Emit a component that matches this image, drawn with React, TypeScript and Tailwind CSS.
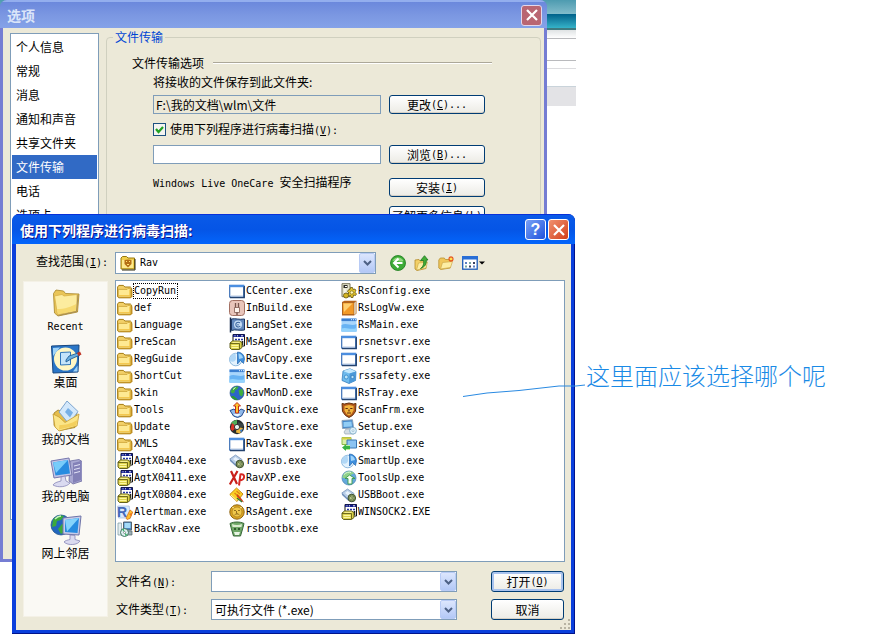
import { Fragment, useState } from 'react';
import type { ReactNode } from 'react';

const categories = ['个人信息', '常规', '消息', '通知和声音', '共享文件夹', '文件传输', '电话', '选项卡'];

const files: [string, string][] = [
  ['CopyRun', 'folder'],
  ['def', 'folder'],
  ['Language', 'folder'],
  ['PreScan', 'folder'],
  ['RegGuide', 'folder'],
  ['ShortCut', 'folder'],
  ['Skin', 'folder'],
  ['Tools', 'folder'],
  ['Update', 'folder'],
  ['XMLS', 'folder'],
  ['AgtX0404.exe', 'agent'],
  ['AgtX0411.exe', 'agent'],
  ['AgtX0804.exe', 'agent'],
  ['Alertman.exe', 'alert'],
  ['BackRav.exe', 'backup'],
  ['CCenter.exe', 'window'],
  ['InBuild.exe', 'plug'],
  ['LangSet.exe', 'flag'],
  ['MsAgent.exe', 'agent'],
  ['RavCopy.exe', 'pie'],
  ['RavLite.exe', 'sky'],
  ['RavMonD.exe', 'globe'],
  ['RavQuick.exe', 'quick'],
  ['RavStore.exe', 'store'],
  ['RavTask.exe', 'window'],
  ['ravusb.exe', 'usb'],
  ['RavXP.exe', 'xp'],
  ['RegGuide.exe', 'guide'],
  ['RsAgent.exe', 'badge'],
  ['rsbootbk.exe', 'bin'],
  ['RsConfig.exe', 'config'],
  ['RsLogVw.exe', 'book'],
  ['RsMain.exe', 'sky'],
  ['rsnetsvr.exe', 'window'],
  ['rsreport.exe', 'window'],
  ['rssafety.exe', 'cube'],
  ['RsTray.exe', 'window'],
  ['ScanFrm.exe', 'lion'],
  ['Setup.exe', 'setup'],
  ['skinset.exe', 'skin'],
  ['SmartUp.exe', 'pie'],
  ['ToolsUp.exe', 'toolsup'],
  ['USBBoot.exe', 'usb'],
  ['WINSOCK2.EXE', 'agent'],
];

const fileIcons: Record<string, ReactNode> = {
  folder: (
    <>
      <path d="M.6 4 1.800 2.400h4.600l1.400 1.600h5.600l1.200 1.200v8.400l-1 1.200H1.800l-1.200-1z" fill="#f2d068" stroke="#a57c12" />
      <path d="M13.500 6.500h1.900v6.800l-1.600 1.600H3z" fill="#c08f22" />
      <path d="M1.300 6.400h8.800l1-1h2.500v8.600H1.300z" fill="#fee992" stroke="#c69b2c" strokeWidth=".7" />
      <path d="M2 12.600h11M12.800 6.500v7" stroke="#f3c548" />
    </>
  ),
  window: (
    <>
      <rect x=".7" y="2.500" width="14" height="11.500" fill="#fff" stroke="#3b6fb5" strokeWidth="1.200" />
      <path d="M.3 1.800h14.900v2.400H.3z" fill="#4b8ee0" />
      <path d="M15.300 3v11.700H1" fill="none" stroke="#24436f" strokeWidth="1.300" />
      <path d="M2 13h12" stroke="#b9c8df" />
    </>
  ),
  sky: (
    <>
      <rect x=".5" y="1.500" width="15" height="13" fill="#a9d6fb" />
      <path d="M.5 8c5-3 10 2 15-1v7.500H.5z" fill="#68b3f3" />
      <path d="M.5 11.500c5-2 9 2 15-.5v3.500H.5z" fill="#93d3fc" />
      <path d="M.5 1.500h15v2.600H.5z" fill="#3c7fd0" />
      <path d="M10 2.700h1m1 0h1m1 0h1" stroke="#e6f3ff" />
    </>
  ),
  agent: (
    <>
      <path d="M4 .5h11.500v11.500H4z" fill="#fff" stroke="#111" />
      <path d="M4 .5h11.500V3H4z" fill="#141f8e" />
      <path d="M5.500 1.800h1m1.500 0h1m3 0h2" stroke="#eee" />
      <path d="M6 5.500h2m1 0h2m1 0h2" stroke="#2635a0" strokeWidth="1.600" />
      <path d="M13.500 7v4" stroke="#222" strokeWidth="1.500" />
      <path d="m1 9 2.500-2h7l2.500 1.500v5l-2.500 2h-8L1 14z" fill="#dcd24a" stroke="#55520f" strokeWidth=".9" />
      <path d="M1 9.500h9.500V15" fill="none" stroke="#55520f" strokeWidth=".8" />
      <path d="M3.500 8.300h7M2.500 11.500h7M2.500 13.500h7" stroke="#fdf7a2" />
    </>
  ),
  alert: (
    <>
      <path d="M.7 2h11.500l1.500 12H1.500z" fill="#d9e8fb" stroke="#91aed9" strokeWidth=".6" />
      <text x="0" y="13" fontSize="14" fontWeight="bold" fontFamily="Liberation Sans, sans-serif" fill="#4368b9">R</text>
      <path d="m9 14 4-8 2.700 2-2.700 6.500-3 1z" fill="#ffc02e" stroke="#cf6712" strokeWidth=".7" />
      <path d="m12 10 3.500-1.500-1 4z" fill="#ef7a1c" />
    </>
  ),
  backup: (
    <>
      <path d="M6.500 1h8v8h-8z" fill="#4b87c5" stroke="#52636e" />
      <path d="M7.500 2h6v5h-6z" fill="#a4dbf8" />
      <path d="M8 10h7v4H8z" fill="#9aaeb5" stroke="#53646b" strokeWidth=".7" />
      <path d="M1 2h3.500v12H1z" fill="#e4eef0" stroke="#7a959b" strokeWidth=".7" />
      <circle cx="7.500" cy="11.500" r="4" fill="#dceef0" stroke="#3f7260" />
      <path d="m7.500 11.500-2.500-3 2-.8zM7.500 11.500l3 2.500-2 1z" fill="#3cb66a" />
      <circle cx="7.500" cy="11.500" r="1" fill="#fff" stroke="#333" strokeWidth=".4" />
    </>
  ),
  plug: (
    <>
      <rect x=".5" y=".5" width="15" height="15" rx="3" fill="#e9c5ba" stroke="#a37063" />
      <path d="M6.500 3v5M9.500 3v5" stroke="#79554c" strokeWidth="1.300" />
      <path d="M5.500 7.500h5v5h-5z" fill="#fff4ec" stroke="#835b50" strokeWidth=".8" />
      <path d="M8 12.500V15" stroke="#69473f" strokeWidth="1.300" />
    </>
  ),
  flag: (
    <>
      <path d="M1.500.5v15" stroke="#14284c" strokeWidth="1.500" />
      <path d="M2.500 2c4-1 7 1 13 0v11c-5 1-9-1-13 .5z" fill="#6288bd" stroke="#1c3763" />
      <circle cx="9" cy="7.500" r="4" fill="#c5dcf4" />
      <path d="M11 6a2.400 2.400 0 1 0 .2 3M9 7v1.500" fill="none" stroke="#3c669f" strokeWidth="1.100" />
    </>
  ),
  pie: (
    <>
      <circle cx="6.800" cy="8.500" r="6.300" fill="#e3f2fd" stroke="#77a9d5" strokeWidth=".8" />
      <path d="M1 10c3 2 6 0 6-3L6.500 2.500A6 6 0 0 0 1 10z" fill="#b0d7f6" />
      <path d="M8.500 1a7 7 0 0 1 7 7l-1 4.500-3-3-3 3.500z" fill="#3f8fdd" stroke="#2266ae" strokeWidth=".7" />
      <path d="M9.500 2.500c2.500.5 4 2 4.500 4.500l-4 1z" fill="#9fd4fa" />
    </>
  ),
  globe: (
    <>
      <circle cx="8" cy="8" r="7" fill="#2c65c8" stroke="#17427f" strokeWidth=".6" />
      <path d="M3 4C5 1.500 8 1.200 9.500 2L8 4.500l-2 .5-.5 2.500-2 1L1.500 7zM9.500 5.500 13 3.500l1.500 4-1.500 4-2.500-1.500z" fill="#3eae3f" />
      <path d="M2 11.500c2-1 3.500-.5 4.500 1l2.500 2.300c-3 .6-5.500-.8-7-3.300z" fill="#2b9a32" />
      <path d="M4 4.500 6.500 2.500" stroke="#e8ffe0" />
    </>
  ),
  quick: (
    <>
      <path d="M1 8.500 5 7l3 3.500L12 7l3.500 1.500-3 5.500-4 1.500-4-1.500z" fill="#8fb9ea" stroke="#254a8c" />
      <path d="M8 .5 11.500 4H9.500v7h-3V4h-2z" fill="#ffc62c" stroke="#c22b18" />
      <path d="M4.500 12h7L9.500 14h-3z" fill="#e9f4ff" />
    </>
  ),
  store: (
    <>
      <circle cx="8" cy="8" r="7.200" fill="#262c2b" />
      <path d="M8 8 2 4.500A7 7 0 0 1 8 1z" fill="#4fae58" />
      <path d="M8 8 3 4l-1.500 6 2 2z" fill="#d93427" />
      <path d="m8 8 1-5 5 2v3z" fill="#3a4546" />
      <path d="m8 8 6 1-3 5.500-4-1z" fill="#e9b53c" />
      <path d="m11 11 3-1-2 4z" fill="#3a7fd2" />
      <circle cx="8" cy="8" r="2.600" fill="#e7f5ef" stroke="#333" />
    </>
  ),
  usb: (
    <>
      <path d="m.8 6 5.700-4 6.500 4.500-5.500 6z" fill="#b8cee8" stroke="#7a95bb" strokeWidth=".8" />
      <path d="m.8 6 6.700 6.500v1.500L1 8z" fill="#6f8fbc" />
      <path d="m4 6 2.500-2 3.500 2.500-2.500 2.500z" fill="#e8f2fc" />
      <circle cx="10.800" cy="11" r="3.800" fill="#80925c" stroke="#3e5130" />
      <circle cx="10.800" cy="11" r="1.500" fill="#eff3ad" />
      <path d="m9 8.500 4 5M13 8.500l-3.500 5" stroke="#526c42" strokeWidth=".7" />
    </>
  ),
  xp: (
    <>
      <path d="m2 1 6 13M8.500 1 .8 14.500" stroke="#c9201b" strokeWidth="2.200" />
      <path d="m11.500 4-1.500 11.500M11 4.500c5.500-2 5.500 6-.5 6" fill="none" stroke="#d52722" strokeWidth="2" />
    </>
  ),
  guide: (
    <>
      <path d="M7.500 1 14 7l-6 7.500L.8 7.500z" fill="#fbcf25" stroke="#c88b0f" />
      <path d="m2 8 6 5.500" stroke="#fff2a0" />
      <path d="m5.500 6 4 3.500M7.500 4l3.500 3" stroke="#e08317" strokeWidth="1.300" />
      <path d="m8.500 7 5 6 1.500 2.500-3-1.500-4.500-5z" fill="#d4421c" />
      <path d="m8 11 5 4" stroke="#267b31" strokeWidth="1.200" />
    </>
  ),
  badge: (
    <>
      <circle cx="8" cy="8" r="7.200" fill="#dba622" stroke="#8f6513" />
      <circle cx="8" cy="8" r="5" fill="#efc84b" stroke="#a8791a" strokeWidth=".7" />
      <path d="M5 6.500h2M9 6.500h2M7.500 7v2.500h1M5.500 11c1.500-1.500 3.500-1.500 5 0" fill="none" stroke="#95701e" />
      <path d="m3 3 2 1M13 3l-2 1" stroke="#ffe994" />
    </>
  ),
  bin: (
    <>
      <path d="M1 2.500c4-2 10-2 14 0l-1 4-2.500 8.500h-7L2 6.500z" fill="#70a868" stroke="#38663a" />
      <path d="M3 3c3 1.200 7 1.200 10 0l-.5 3H3.500z" fill="#dcecd2" />
      <path d="M5 7h2v2H5zM9 7h2v2H9z" fill="#315b30" />
      <path d="M5 11h6l-1 3H6z" fill="#e9f5e5" />
    </>
  ),
  config: (
    <>
      <path d="M1 .7h8v13H1z" fill="#e7e5cd" stroke="#77745a" />
      <path d="M2.500 2h4v3h-4z" fill="#2d2d25" />
      <path d="M3 7h2M3 9h2M3 11h2M4 3.500h2" stroke="#fff" />
      <path d="m9 6.500.5-2h2l.5 2 2-.5 1 1.800-1.300 1.200L15.500 11l-1 1.500-2-.5-.5 2.500h-2l-.5-2-2 .7-1-1.700L8 10 6.500 8.500l1-1.700z" fill="#e3c42b" stroke="#625410" strokeWidth=".8" />
      <circle cx="10.800" cy="9.500" r="1.700" fill="#fff7b4" stroke="#746314" strokeWidth=".7" />
      <circle cx="5" cy="12.500" r="2.500" fill="#d5b621" stroke="#665711" strokeWidth=".8" />
    </>
  ),
  book: (
    <>
      <path d="m1 2 2.500-1.200h12v12.700L13 15.500H1z" fill="#b9651a" />
      <path d="M1.500 2.500H13v12H1.500z" fill="#f39a27" stroke="#9f5a20" strokeWidth=".7" />
      <path d="M2.500 3.500h9L3 12z" fill="#ffd071" />
      <path d="M13 3 15.500 1v12L13 15z" fill="#d9c2a3" />
    </>
  ),
  cube: (
    <>
      <path d="M2 3 9 .8l6 2.700-.5 9L8 15.500 1 12.500z" fill="#6fbbed" stroke="#2672b6" strokeWidth=".7" />
      <path d="m2 3 6.500 2.500L15 3.500 9 .8z" fill="#c3e8fd" />
      <path d="m8.500 5.500 6.500-2-.5 9-6.500 3z" fill="#4a98d8" />
      <circle cx="5.200" cy="9" r="2" fill="#b9e4fa" stroke="#2e84c6" strokeWidth=".8" />
      <circle cx="11.500" cy="9" r="1.600" fill="#b9e4fa" stroke="#2e74b6" strokeWidth=".7" />
    </>
  ),
  lion: (
    <>
      <path d="M1 1.500 3.500 2 8 1l4.500 1 2.500-.5-.5 8-3 4L8 15.500l-3.500-2-3-4z" fill="#b4581a" stroke="#63300c" />
      <path d="M3.500 4 8 3l4.500 1v4.500L10.500 12 8 13.500 5.500 12l-2-3.500z" fill="#f2b53c" />
      <path d="M4.500 6.500h2.300M9.200 6.500h2.300M8 7.500v2M6 11h4" fill="none" stroke="#622b0c" strokeWidth="1.200" />
    </>
  ),
  setup: (
    <>
      <path d="m1 1.500 10.500-.7 1 8-11 .7z" fill="#4186ca" stroke="#8ba4bb" />
      <path d="m2.500 3 8-.5.500 5-8.500.5z" fill="#91cdf5" />
      <path d="M5 10h5v2l4 .5-1 2.500H4l-1-2z" fill="#d4dde4" stroke="#8898a8" strokeWidth=".6" />
      <circle cx="12" cy="11.700" r="3.400" fill="#ddeff9" stroke="#77a7c4" strokeWidth=".8" />
      <circle cx="12" cy="11.700" r="1" fill="#fff" stroke="#6d9fbd" strokeWidth=".5" />
    </>
  ),
  skin: (
    <>
      <path d="M1 1.500h9v7H1z" fill="#d9f0a9" stroke="#8cb948" />
      <path d="M1 1.500h9v2H1z" fill="#d9cf46" />
      <path d="M6 4h9.500v8H6z" fill="#8cc3f2" stroke="#3b77b3" />
      <path d="M3 9h6v5H3z" fill="#baf0a0" />
      <path d="m1 11.500 4-3V10h4v3H5v2z" fill="#36b247" />
    </>
  ),
  toolsup: (
    <>
      <circle cx="8" cy="8" r="7" fill="#64a9dc" stroke="#5089b7" strokeWidth=".8" />
      <path d="M1.500 7a7 7 0 0 1 12-3.500c-3 .5-5 2-5 4.500H1.500z" fill="#8fd18a" />
      <path d="M8.500 5 14 8.500h-3V14H7V8.500H4z" fill="#f4fff2" stroke="#3a9b47" strokeWidth=".9" />
      <path d="M3 4.500c2-2 5-3 7-2" stroke="#dff7da" fill="none" />
    </>
  ),
};

function FileIcon({ name }: { name: string }) {
  return (
    <svg viewBox="0 0 16 16" className="w-4 h-4 shrink-0" aria-hidden="true">
      {fileIcons[name]}
    </svg>
  );
}

const places: { label: string; icon: ReactNode }[] = [
  {
    label: 'Recent',
    icon: (
      <>
        <path d="M3.500 7.500 6 4l7.500 1 2 2.500L29 8l-1.500 18L8 30l-3.500-3z" fill="#e9c558" stroke="#a58428" strokeWidth=".8" />
        <path d="m4.500 10 3 18.500L27 25 27 8.500 14 10l-2-1.500z" fill="#fcec9f" stroke="#d5ad43" strokeWidth=".7" />
        <path d="m8 28 18.500-3.500.5-7C21 21 15 23 7 23z" fill="#f6d96f" />
        <path d="m28 9-1.500 16.500-18 4" stroke="#a88f56" fill="none" />
      </>
    ),
  },
  {
    label: '桌面',
    icon: (
      <>
        <path d="M1.500 3 29 2l-1 27-25 1z" fill="#2a76c7" stroke="#17477f" />
        <path d="M3 5 10 4.500 3 13zM23 28.500l4.500-6v6z" fill="#9fd4f8" />
        <circle cx="15.500" cy="16" r="11.500" fill="#fff7c5" />
        <path d="m10.500 9.500 10-.5v12.500l-10 .5z" fill="#c3e4fa" stroke="#2f76ba" />
        <path d="m16 17 3-4 9-3 2 2-9 4-5 3z" fill="#67afe0" stroke="#19538b" strokeWidth=".8" />
        <path d="m27 10 3-1.500 1.500 3-3 1.500z" fill="#bf3525" />
      </>
    ),
  },
  {
    label: '我的文档',
    icon: (
      <>
        <path d="m4 13 4-3 4 1.500 15 1-2 15-15 3-6-5z" fill="#e5bd4c" stroke="#9c7c25" strokeWidth=".8" />
        <path d="M9 12 17 1l11 10.500L19 24z" fill="#d3e8fb" stroke="#7da5cf" />
        <path d="m15 12 3-4 5 4.500-3 5z" fill="#76afe6" />
        <path d="m3 14 6 3 6 5.500L29 14l-2 12L9 31l-4-4z" fill="#fbe588" stroke="#c59c31" strokeWidth=".8" />
        <path d="M9 29.500 26 25.500l1.500-5.500c-7 4-12 5-18 5z" fill="#f3cf5d" />
      </>
    ),
  },
  {
    label: '我的电脑',
    icon: (
      <>
        <path d="m20 4 9-1.500 3 2V24l-9 3-4-3z" fill="#a9a8d2" stroke="#6c6ca1" strokeWidth=".8" />
        <path d="m23 6 8-2v19l-8 3z" fill="#8381b7" />
        <path d="m24 9 6-1.500M24 12.500l6-1.500M24 16l6-1.500" stroke="#e3e3f7" />
        <path d="m1 4 18-3 3 17-18 3z" fill="#c2c5e6" stroke="#7777ad" />
        <path d="m3 5.500 15-2.500 2 13.500-14.500 2z" fill="#278ce0" />
        <path d="m3 5.500 15-2.500-12 13z" fill="#77ccfa" />
        <path d="m11 20 4-1 1 5 4 2c-3 4-12 5-17 2 1-2 4-3 8-4z" fill="#dadaf0" stroke="#8886b7" strokeWidth=".8" />
      </>
    ),
  },
  {
    label: '网上邻居',
    icon: (
      <>
        <circle cx="11" cy="11" r="10" fill="#2267be" stroke="#194c83" strokeWidth=".7" />
        <path d="M3 6c2-4 8-5.500 11-4l-3 4-4 1-1 5-4 1zM12 10l6 1-2 6-5 3-3-5z" fill="#3caa3c" />
        <path d="M5 5c2-2 4-3 6-3" stroke="#c9f3bd" strokeWidth="1.500" fill="none" />
        <path d="m13 4 18-2-2 19-16-1z" fill="#c8cce9" stroke="#6e74a8" />
        <path d="m15 6 14-2-1.500 15L15 18z" fill="#278ce0" />
        <path d="m15 6 14-2-12 13.500z" fill="#86d4fb" />
        <path d="m20 21 5 .5v4l5 1.500c-2 4-12 5-16 1 1-1.500 4-2 6-2.500z" fill="#dadaf0" stroke="#8886b7" strokeWidth=".8" />
      </>
    ),
  },
];

// Latin runs are set in a half-width face beside the 12px Chinese
function Mixed({ children }: { children: string }) {
  return (
    <>
      {children.split(/([\x20-\x7e]+)/).map((part, i) =>
        i % 2 ? (
          <span key={i} className="text-[10px] font-['DejaVu_Sans_Mono',monospace] whitespace-pre">
            {part}
          </span>
        ) : (
          <Fragment key={i}>{part}</Fragment>
        )
      )}
    </>
  );
}

function AccessKey({ letter, after = '' }: { letter: string; after?: string }) {
  return (
    <span className="text-[10px] font-['DejaVu_Sans_Mono',monospace]">
      (<u>{letter}</u>){after}
    </span>
  );
}

function PushButton({ children, primary }: { children: ReactNode; primary?: boolean }) {
  return (
    <button
      type="button"
      className={`w-full h-full rounded-[3px] border border-[#003c74] bg-linear-to-b from-white to-[#ecebe5] flex items-center justify-center whitespace-nowrap ${
        primary ? 'shadow-[inset_0_0_0_2px_#a9c3ee]' : 'shadow-[inset_0_-1px_0_#d6d0c5]'
      }`}
    >
      {children}
    </button>
  );
}

function DropArrow() {
  return (
    <span className="pointer-events-none absolute right-px inset-y-px w-4 rounded-[2px] border border-[#b8cbf5] bg-linear-to-b from-[#dce6fd] to-[#b3c8f6] flex items-center justify-center">
      <svg viewBox="0 0 9 6" className="w-[9px] h-[6px]" aria-hidden="true">
        <path d="m1 1 3.500 3.500L8 1" fill="none" stroke="#4d6185" strokeWidth="2" />
      </svg>
    </span>
  );
}

function OptionsWindow() {
  const [active, setActive] = useState('文件传输');
  const [scan, setScan] = useState(true);

  return (
    <section className="absolute left-0 top-0 w-full max-w-[547px] rounded-t-[7px] bg-[#757dd3] overflow-hidden">
      <header className="h-7 pl-[7px] pr-[5px] flex items-center justify-between bg-linear-to-b from-[#6b88dc] via-[#7b97e2] to-[#85a2e8] border-t-2 border-[#93aeee]">
        <h1 className="text-sm font-bold text-[#dbe5f9]">选项</h1>
        <button
          type="button"
          aria-label="关闭"
          className="w-[21px] h-[21px] rounded-[3px] border border-[#e3d7ea] bg-[#b96672] flex items-center justify-center"
        >
          <svg viewBox="0 0 12 12" className="w-3 h-3">
            <path d="m1 1 10 10M11 1 1 11" stroke="#fff" strokeWidth="2.200" />
          </svg>
        </button>
      </header>

      <div className="mx-[3px] mb-[3px] pt-[5px] pl-[7px] pr-[3px] pb-[39px] bg-[#ece9d8] flex gap-[7px]">
        {/* Categories */}
        <ul className="w-[89px] h-[487px] shrink-0 border border-[#7f9db9] bg-white p-px">
          {categories.map((item) => (
            <li key={item}>
              <button
                type="button"
                onClick={() => setActive(item)}
                className={`w-full h-6 pl-1 text-left ${item === active ? 'bg-[#316ac5] text-white' : ''}`}
              >
                {item}
              </button>
            </li>
          ))}
        </ul>

        <fieldset className="flex-1 min-w-0 -mt-1 h-[491px] rounded-[4px] border border-[#d0d0bf] pl-[25px] pr-12">
          <legend className="-ml-[19px] px-[2px] leading-4 text-[#0046d5]">文件传输</legend>
          <div className="mt-2 h-5 flex items-center gap-[9px]">
            <h2>文件传输选项</h2>
            <span className="flex-1 h-[2px] border-t border-[#aca899] bg-white" />
          </div>
          <div className="pl-[21px] pr-[7px] grid grid-cols-[minmax(0,1fr)_96px] gap-x-2">
            <label htmlFor="folder" className="col-span-2 h-[18px] leading-[18px]">将接收的文件保存到此文件夹:</label>
            <input
              id="folder"
              readOnly
              defaultValue="F:\我的文档\wlm\文件"
              className="mt-1 h-[19px] min-w-0 px-[2px] border border-[#7f9db9] bg-[#ece9d8]"
            />
            <div className="mt-1 h-[19px]">
              <PushButton>更改<AccessKey letter="C" after="..." /></PushButton>
            </div>
            <label className="col-span-2 my-[6px] h-[19px] flex items-center gap-1">
              <span className="relative w-[13px] h-[13px]">
                <input
                  type="checkbox"
                  checked={scan}
                  onChange={(e) => setScan(e.target.checked)}
                  className="block appearance-none w-[13px] h-[13px] border border-[#1c5180] bg-[#f4f4f0]"
                />
                {scan && (
                  <svg viewBox="0 0 13 13" className="absolute inset-0 pointer-events-none">
                    <path d="m3 6 2.500 3L10 4" fill="none" stroke="#21a121" strokeWidth="2.200" />
                  </svg>
                )}
              </span>
              <span>使用下列程序进行病毒扫描<AccessKey letter="V" after=":" /></span>
            </label>
            <input aria-label="病毒扫描程序" className="h-[19px] min-w-0 px-[2px] border border-[#7f9db9] bg-white" />
            <div className="h-[19px]">
              <PushButton>浏览<AccessKey letter="B" after="..." /></PushButton>
            </div>
            <p className="mt-[10px] h-5"><Mixed>Windows Live OneCare 安全扫描程序</Mixed></p>
            <div className="mt-[14px] h-[19px]">
              <PushButton>安装<AccessKey letter="I" /></PushButton>
            </div>
            <div className="col-start-2 mt-[9px] h-[19px]">
              <PushButton>了解更多信息<AccessKey letter="L" /></PushButton>
            </div>
          </div>
        </fieldset>
      </div>
    </section>
  );
}

function Toolbar() {
  return (
    <div className="ml-[14px] flex items-center gap-2">
      <button type="button" aria-label="后退">
        <svg viewBox="0 0 16 16" className="w-4 h-4">
          <circle cx="8" cy="8" r="7.500" fill="#3daa36" stroke="#197b1b" strokeWidth=".8" />
          <path d="M2.500 6a6 6 0 0 1 11 0C10 8 6 4 2.500 6z" fill="#93db80" />
          <path d="M8.500 3.500 4 8l4.500 4.500M4.500 8H12.500" fill="none" stroke="#fff" strokeWidth="2" />
        </svg>
      </button>
      <button type="button" aria-label="向上">
        <svg viewBox="0 0 16 16" className="w-4 h-4">
          <path d="m1 5 4-.5 1 1.500 6-.5v8l-9 2-2-1.500z" fill="#f3d067" stroke="#b28c2c" strokeWidth=".8" />
          <path d="m2.500 15 2-7 9-1-1.500 6z" fill="#fdeea4" stroke="#c8a445" strokeWidth=".6" />
          <path d="M6.500 13.500c3-2 3.500-5 3-8H6.500L10.500.7 14 5h-1.800c.5 4-1.200 7-5.700 8.500z" fill="#43ad37" stroke="#1c761e" strokeWidth=".8" />
        </svg>
      </button>
      <button type="button" aria-label="新建文件夹">
        <svg viewBox="0 0 16 16" className="w-4 h-4">
          <path d="m.8 5 1.500-2h4l1 1.500h5V13l-9.500 1.500L.8 13z" fill="#f0c75b" stroke="#b99230" strokeWidth=".8" />
          <path d="m2.500 14 2-6.500 10-1-2 6z" fill="#fdeea4" stroke="#cfa94a" strokeWidth=".7" />
          <path d="M13 1v6M10 4h6M11 2l4 4M15 2l-4 4" stroke="#e6561d" strokeWidth="1.200" />
          <circle cx="13" cy="4" r="1.300" fill="#ffe14a" />
        </svg>
      </button>
      <button type="button" aria-label="查看">
        <svg viewBox="0 0 23 16" className="w-[23px] h-4">
          <rect x=".7" y="1.700" width="14.500" height="12.500" fill="#fff" stroke="#1c5bb8" strokeWidth="1.300" />
          <path d="M0 1h16v3.500H0z" fill="#2a6fd6" />
          <path d="M3 7h2v2H3zM11 10.500h2v2h-2z" fill="#5b7fc0" />
          <path d="M7 7h2v2H7zM3 10.500h2v2H3z" fill="#77a8a0" />
          <path d="M11 7h2v2h-2zM7 10.500h2v2H7z" fill="#39405e" />
          <path d="M17 6.500h6l-3 3z" fill="#000" />
        </svg>
      </button>
    </div>
  );
}

function OpenDialog() {
  const [selected, setSelected] = useState('CopyRun');

  return (
    <section className="absolute left-3 top-[214px] w-full max-w-[563px] rounded-t-[7px] bg-[#0a3fdc] shadow-[inset_-1px_-1px_0_#00138c] overflow-hidden">
      <header className="h-[30px] pl-2 pr-[6px] flex items-center bg-linear-to-b from-[#0a5ae8] via-[#0555e6] to-[#0465fb] border-t border-[#0831d9]">
        <h2 className="flex-1 text-sm font-bold text-white [text-shadow:1px_1px_#0f1089]">使用下列程序进行病毒扫描:</h2>
        <button
          type="button"
          className="w-[21px] h-[21px] mr-[2px] rounded-[3px] border border-white bg-linear-to-br from-[#7aa0f5] to-[#1f50dc] text-white text-base leading-none font-bold font-['Liberation_Sans',sans-serif]"
        >
          ?
        </button>
        <button
          type="button"
          aria-label="关闭"
          className="w-[21px] h-[21px] rounded-[3px] border border-white bg-linear-to-br from-[#f0906f] to-[#d13c12] flex items-center justify-center"
        >
          <svg viewBox="0 0 12 12" className="w-3 h-3">
            <path d="m1 1 10 10M11 1 1 11" stroke="#fff" strokeWidth="2.200" />
          </svg>
        </button>
      </header>

      <div className="relative mx-1 mb-1 pt-2 pl-[7px] pr-[6px] pb-[10px] bg-[#ece9d8]">
        {/* Look in */}
        <div className="flex items-center mb-[6px]">
          <label htmlFor="look-in" className="w-[92px] pl-[13px] shrink-0 whitespace-nowrap -mt-1">
            查找范围<AccessKey letter="I" after=":" />
          </label>
          <div className="relative w-[261px]">
            <select
              id="look-in"
              className="block appearance-none w-full h-[22px] pl-6 border border-[#7f9db9] bg-white text-[10px] font-['DejaVu_Sans_Mono',monospace]"
            >
              <option>Rav</option>
            </select>
            <svg viewBox="0 0 16 16" className="absolute left-[5px] top-[3px] w-4 h-4 pointer-events-none">
              <path d="M1 3 2.500 1.500h4L8 3h6.500v11H1z" fill="#f0cf4c" stroke="#97780f" />
              <path d="M2 5h11v8H2z" fill="#fde98d" />
              <path d="m4.500 5 3.500-.5 3.500.5v4L8 12.500 4.500 9z" fill="#b56f15" />
              <path d="M6 6.500h1M9 6.500h1M7 9.500h2" stroke="#ffe26f" />
              <path d="M15 4v11H2" fill="none" stroke="#2e2a12" />
            </svg>
            <DropArrow />
          </div>
          <Toolbar />
        </div>

        <div className="flex gap-[7px]">
          {/* Places */}
          <nav className="w-[85px] shrink-0 mt-px mb-[3px] pt-1 border border-[#f4f1e6] bg-[#faf9f4] flex flex-col gap-3">
            {places.map((place) => (
              <button key={place.label} type="button" className="w-full flex flex-col items-center">
                <svg viewBox="0 0 32 32" className="w-8 h-8" aria-hidden="true">
                  {place.icon}
                </svg>
                <span className="h-[13px] leading-[13px]"><Mixed>{place.label}</Mixed></span>
              </button>
            ))}
          </nav>

          <div className="flex-1 min-w-0">
            <ul className="h-[282px] p-px border border-[#7f9db9] bg-white grid grid-flow-col grid-rows-[repeat(15,17px)] auto-cols-[112px] content-start">
              {files.map(([name, icon]) => (
                <li key={name}>
                  <button type="button" onClick={() => setSelected(name)} className="h-[17px] flex items-center">
                    <FileIcon name={icon} />
                    <span
                      className={`h-4 leading-4 pr-px border border-dotted text-[10px] font-['DejaVu_Sans_Mono',monospace] flex items-center ${
                        name === selected ? 'border-black' : 'border-transparent'
                      }`}
                    >
                      {name}
                    </span>
                  </button>
                </li>
              ))}
            </ul>

            <div className="mt-[9px] pl-px pr-px grid grid-cols-[95px_minmax(0,246px)_minmax(73px,1fr)] gap-y-[7px] items-center">
              <label htmlFor="file-name">文件名<AccessKey letter="N" after=":" /></label>
              <div className="relative">
                <input id="file-name" className="block w-full h-[21px] pl-1 pr-5 border border-[#7f9db9] bg-white" />
                <DropArrow />
              </div>
              <div className="w-[73px] h-[21px] justify-self-end">
                <PushButton primary>打开<AccessKey letter="O" /></PushButton>
              </div>
              <label htmlFor="file-type">文件类型<AccessKey letter="T" after=":" /></label>
              <div className="relative">
                <select
                  id="file-type"
                  className="block appearance-none w-full h-[21px] pl-[3px] border border-[#7f9db9] bg-white"
                >
                  <option>可执行文件 (*.exe)</option>
                </select>
                <DropArrow />
              </div>
              <div className="w-[73px] h-[21px] justify-self-end">
                <PushButton>取消</PushButton>
              </div>
            </div>
          </div>
        </div>

        <svg viewBox="0 0 12 12" className="absolute right-0 bottom-0 w-3 h-3" aria-hidden="true">
          <path d="M9 1h2v2H9zM5 5h2v2H5zM9 5h2v2H9zM1 9h2v2H1zM5 9h2v2H5zM9 9h2v2H9z" fill="#b8b4a3" />
        </svg>
      </div>
    </section>
  );
}

export default function App() {
  return (
    <main className="relative min-h-screen overflow-hidden bg-white text-xs text-black font-['Noto_Sans_CJK_SC',sans-serif]">
      {/* Edge of the window behind */}
      <div className="w-full max-w-[576px]">
        <div className="h-[14px] bg-linear-to-b from-[#4d9bb0] to-[#82bccb]" />
        <div className="h-4 bg-linear-to-b from-[#00618a] to-[#35b3c8] border-b-2 border-[#3e7a80]" />
        <div className="h-[9px] bg-linear-to-b from-[#dfe3e4] to-white border-b border-[#b9babd]" />
        <div className="h-[22px] border-b border-[#b9babd]" />
        <div className="h-2 border-b border-[#dcdcdf]" />
        <div className="h-[17px]" />
        <div className="h-5 bg-[#e3e3e6] border-t border-[#c9d3da]" />
      </div>

      <OptionsWindow />
      <OpenDialog />

      {/* Handwritten question */}
      <div className="absolute left-[462px] top-[359px] flex items-start text-[#1a8ae6]">
        <svg viewBox="0 0 124 40" className="w-[124px] h-10 shrink-0" aria-hidden="true">
          <path d="M1 37.500 25 34l32-2.500 40-4.500h17l9-1" fill="none" stroke="#2a8ae2" />
        </svg>
        <p className="text-2xl leading-8 font-light whitespace-nowrap">这里面应该选择哪个呢</p>
      </div>
    </main>
  );
}
